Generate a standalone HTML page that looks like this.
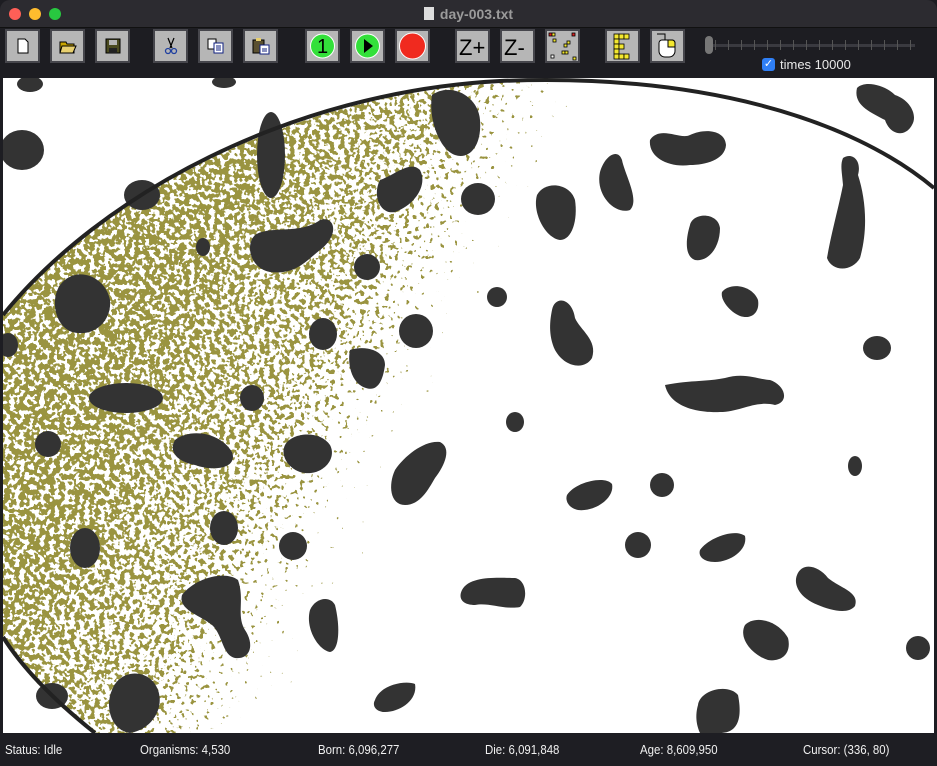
<!DOCTYPE html>
<html><head><meta charset="utf-8"><style>
*{margin:0;padding:0;box-sizing:border-box}
body{width:937px;height:766px;background:#1d1d22;font-family:"Liberation Sans",sans-serif;position:relative;overflow:hidden}
.title{position:absolute;left:0;top:0;width:937px;height:28px;background:#2c2b30;border-bottom:1px solid #111;border-radius:10px 10px 0 0}
.dot{position:absolute;top:8px;width:12px;height:12px;border-radius:50%}
.ttext{position:absolute;left:0;width:937px;top:6px;text-align:center;color:#9b9b9b;font-size:14px;font-weight:bold}
.btn{position:absolute;top:29px;width:35px;height:34px;background:#b6b6b6;border:2px solid #46464c}
.btn svg{position:absolute;left:0;top:0}
.status{position:absolute;top:733px;left:0;width:937px;height:33px;background:#1e1e23;color:#f0f0f0;font-size:13px}
.status span{position:absolute;top:9px;display:inline-block;transform:scaleX(0.88);transform-origin:left}
</style></head><body>
<div class="title">
<div class="dot" style="left:9px;background:#fe5f57"></div>
<div class="dot" style="left:29px;background:#febc2e"></div>
<div class="dot" style="left:49px;background:#28c840"></div>
<div class="ttext"><span style="display:inline-block;width:10px;height:13px;background:#ddd;margin-right:6px;vertical-align:-1px"></span>day-003.txt</div>
</div>

<div class="btn" style="left:5px"><svg width="31" height="30"><path d="M11 8h7l3 3v11h-10z" fill="#fff" stroke="#000"/></svg></div>
<div class="btn" style="left:50px"><svg width="31" height="30"><path d="M8 11h6l1 2h7v9h-14z" fill="#c8a400" stroke="#000"/><path d="M10 15h14l-3 7h-13z" fill="#e8d070" stroke="#000"/></svg></div>
<div class="btn" style="left:95px"><svg width="31" height="30"><rect x="9" y="8" width="14" height="14" fill="#4a4a20" stroke="#000"/><rect x="12" y="9" width="8" height="5" fill="#b6b6b6"/><rect x="12" y="17" width="8" height="5" fill="#222"/></svg></div>
<div class="btn" style="left:153px"><svg width="31" height="30"><path d="M13 7l4 10M19 7l-4 10" stroke="#000" stroke-width="1.2"/><circle cx="13" cy="20" r="2.5" fill="none" stroke="#2040a0" stroke-width="1.3"/><circle cx="19" cy="20" r="2.5" fill="none" stroke="#2040a0" stroke-width="1.3"/></svg></div>
<div class="btn" style="left:198px"><svg width="31" height="30"><rect x="8" y="8" width="8" height="10" fill="#fff" stroke="#000"/><rect x="14" y="12" width="9" height="10" fill="#fff" stroke="#102080"/><path d="M16 15h5M16 17h5M16 19h5" stroke="#102080"/></svg></div>
<div class="btn" style="left:243px"><svg width="31" height="30"><rect x="8" y="9" width="11" height="13" fill="#5a5030" stroke="#000"/><rect x="11" y="7" width="5" height="3" fill="#e8d070"/><rect x="15" y="14" width="9" height="9" fill="#fff" stroke="#102080"/><path d="M17 18h5M17 20h5" stroke="#102080"/></svg></div>
<div class="btn" style="left:305px"><svg width="31" height="30"><circle cx="15.5" cy="15" r="12" fill="#33e03a" stroke="#fff" stroke-width="1"/><text x="15.5" y="22" text-anchor="middle" font-size="20" font-family="Liberation Sans" fill="#000">1</text></svg></div>
<div class="btn" style="left:350px"><svg width="31" height="30"><circle cx="15.5" cy="15" r="12" fill="#33e03a" stroke="#fff" stroke-width="1"/><path d="M12 8l9 7-9 7z" fill="#000"/></svg></div>
<div class="btn" style="left:395px"><svg width="31" height="30"><circle cx="15.5" cy="15" r="13" fill="#f02a1f" stroke="#fff" stroke-width="1"/></svg></div>
<div class="btn" style="left:455px"><svg width="31" height="30"><text x="2" y="24" font-size="22" font-family="Liberation Sans" fill="#000">Z+</text></svg></div>
<div class="btn" style="left:500px"><svg width="31" height="30"><text x="2" y="24" font-size="22" font-family="Liberation Sans" fill="#000">Z-</text></svg></div>
<div class="btn" style="left:545px"><svg width="31" height="30" fill="#f4e830" stroke="#000" stroke-width=".8"><rect x="2" y="2" width="3" height="3" fill="#e02020"/><rect x="5" y="2" width="3" height="3"/><rect x="25" y="2" width="3" height="3" fill="#e02020"/><rect x="6" y="8" width="3" height="3"/><rect x="20" y="10" width="3" height="3"/><rect x="17" y="13" width="3" height="3"/><rect x="15" y="20" width="3" height="3"/><rect x="18" y="20" width="3" height="3"/><rect x="4" y="24" width="3" height="3" fill="#fff"/><rect x="26" y="26" width="3" height="3"/></svg></div>
<div class="btn" style="left:605px"><svg width="31" height="30" fill="#f4e830" stroke="#000" stroke-width=".8"><rect x="7" y="3" width="5" height="5"/><rect x="12" y="3" width="5" height="5"/><rect x="17" y="3" width="5" height="5"/><rect x="7" y="8" width="5" height="5"/><rect x="7" y="13" width="5" height="5"/><rect x="12" y="13" width="5" height="5"/><rect x="7" y="18" width="5" height="5"/><rect x="7" y="23" width="5" height="5"/><rect x="12" y="23" width="5" height="5"/><rect x="17" y="23" width="5" height="5"/></svg></div>
<div class="btn" style="left:650px"><svg width="31" height="30"><path d="M5 3h8v6" fill="none" stroke="#000"/><path d="M10 9h10a3 3 0 0 1 3 3v8a6 6 0 0 1-6 6h-4a6 6 0 0 1-6-6v-8a3 3 0 0 1 3-3z" fill="#fff" stroke="#000"/><path d="M16 9h4a3 3 0 0 1 3 3v4h-7z" fill="#f4e830" stroke="#000"/></svg></div>

<div style="position:absolute;left:705px;top:36px;width:8px;height:18px;border-radius:4px;background:#777"></div>
<div style="position:absolute;left:713px;top:44px;width:202px;height:3px;background:#3a3a40"></div>
<div style="position:absolute;left:715px;top:40px;width:202px;height:10px;background:repeating-linear-gradient(90deg,#555 0 1px,transparent 1px 13px)"></div>
<div style="position:absolute;left:762px;top:58px;width:13px;height:13px;border-radius:3px;background:#2f7ff6;color:#fff;font-size:11px;line-height:13px;text-align:center">✓</div>
<div style="position:absolute;left:780px;top:57px;color:#e8e8e8;font-size:13px">times 10000</div>

<svg style="position:absolute;left:0;top:78px" width="937" height="655" viewBox="0 78 937 655">
<defs>
<clipPath id="sp"><path d="M3,315 C100,195 300,90 520,80 L610,80 L610,733 L95,733 C60,710 20,670 3,637 Z"/></clipPath>
<linearGradient id="g" gradientUnits="userSpaceOnUse" x1="170" y1="300" x2="450" y2="440">
<stop offset="0" stop-color="#fff" stop-opacity="0.5"/><stop offset="0.5" stop-color="#fff" stop-opacity="0.42"/><stop offset="1" stop-color="#fff" stop-opacity="0"/></linearGradient>
<filter id="nz" x="0" y="0" width="1" height="1">
<feTurbulence type="fractalNoise" baseFrequency="0.2" numOctaves="2" seed="3" result="n"/>
<feColorMatrix in="n" type="matrix" values="0 0 0 0 0  0 0 0 0 0  0 0 0 0 0  1 0 0 0 0" result="na"/>
<feComposite in="na" in2="SourceGraphic" operator="arithmetic" k1="0" k2="1" k3="1" k4="-0.95" result="s"/>
<feComponentTransfer in="s" result="t"><feFuncA type="linear" slope="30" intercept="0"/></feComponentTransfer>
<feFlood flood-color="#9a9440"/>
<feComposite in2="t" operator="in"/>
</filter>
</defs>
<rect x="0" y="78" width="937" height="655" fill="#fff"/>
<g clip-path="url(#sp)"><rect x="0" y="78" width="620" height="655" fill="url(#g)" filter="url(#nz)"/></g>
<g fill="#333">
<ellipse cx="22" cy="150" rx="22" ry="20"/>
<ellipse cx="30" cy="84" rx="13" ry="8"/>
<ellipse cx="224" cy="82" rx="12" ry="6"/>
<ellipse cx="271" cy="155" rx="14" ry="43"/>
<ellipse cx="142" cy="195" rx="18" ry="15"/>
<path d="M255 235 C270 225 300 235 320 220 C335 215 340 235 320 250 C305 262 295 275 270 272 C250 268 245 245 255 235Z"/>
<ellipse cx="203" cy="247" rx="7" ry="9"/>
<path d="M60 285 C75 265 105 275 110 300 C112 320 95 338 72 332 C55 326 50 300 60 285Z"/>
<path d="M432 95 C450 82 478 95 480 120 C482 145 470 160 455 155 C440 150 428 120 432 95Z"/>
<path d="M380 180 C395 175 410 160 420 170 C428 185 415 205 395 212 C380 215 372 195 380 180Z"/>
<circle cx="367" cy="267" r="13"/>
<circle cx="416" cy="331" r="17"/>
<ellipse cx="323" cy="334" rx="14" ry="16"/>
<ellipse cx="8" cy="345" rx="10" ry="12"/>
<path d="M350 350 C365 345 385 350 385 365 C383 380 378 392 366 388 C352 384 347 365 350 350Z"/>
<ellipse cx="126" cy="398" rx="37" ry="15"/>
<ellipse cx="252" cy="398" rx="12" ry="13"/>
<circle cx="48" cy="444" r="13"/>
<path d="M175 440 C190 428 220 432 232 452 C238 468 215 472 195 465 C178 462 168 452 175 440Z"/>
<path d="M285 445 C292 432 320 430 330 445 C338 460 320 478 300 472 C288 468 280 455 285 445Z"/>
<ellipse cx="224" cy="528" rx="14" ry="17"/>
<ellipse cx="85" cy="548" rx="15" ry="20"/>
<circle cx="293" cy="546" r="14"/>
<path d="M182 595 C195 578 225 570 238 580 C245 600 236 615 245 630 C255 645 250 660 235 658 C222 655 223 635 212 625 C200 615 178 610 182 595Z"/>
<path d="M310 610 C315 598 330 595 335 605 C340 625 340 650 330 652 C318 650 305 628 310 610Z"/>
<path d="M112 690 C120 668 150 668 158 690 C165 710 150 730 130 733 C110 730 105 705 112 690Z"/>
<ellipse cx="52" cy="696" rx="16" ry="13"/>
<path d="M375 700 C380 685 405 680 415 684 C418 700 400 712 385 712 C375 712 372 705 375 700Z"/>
<ellipse cx="478" cy="199" rx="17" ry="16"/>
<path d="M537 195 C545 180 570 183 575 200 C578 220 572 240 560 240 C545 238 532 212 537 195Z"/>
<path d="M600 172 C605 155 618 148 622 160 C625 175 640 200 630 210 C615 215 595 195 600 172Z"/>
<path d="M650 140 C660 125 680 140 690 135 C705 128 725 130 726 145 C725 160 705 165 690 165 C670 168 648 158 650 140Z"/>
<path d="M690 225 C693 212 718 212 720 228 C720 248 708 262 695 260 C684 256 686 238 690 225Z"/>
<path d="M722 292 C730 282 752 285 758 300 C760 312 752 320 740 316 C730 312 720 300 722 292Z"/>
<ellipse cx="497" cy="297" rx="10" ry="10"/>
<path d="M552 310 C555 295 572 298 575 318 C580 330 598 340 592 358 C585 370 565 368 555 350 C548 335 550 320 552 310Z"/>
<path d="M665 385 C690 380 705 382 725 378 C745 372 760 380 770 380 C785 385 790 402 775 405 C755 400 740 412 720 412 C700 413 670 408 665 385Z"/>
<path d="M843 158 C852 152 862 160 858 175 C866 200 868 230 860 258 C852 272 832 272 827 258 C832 230 838 210 843 185 C842 172 840 165 843 158Z"/>
<path d="M857 88 C865 80 885 85 895 95 C910 100 918 115 912 125 C905 138 890 135 885 120 C870 112 853 105 857 88Z"/>
<ellipse cx="877" cy="348" rx="14" ry="12"/>
<ellipse cx="515" cy="422" rx="9" ry="10"/>
<path d="M395 470 C405 455 425 440 440 442 C452 448 445 465 435 478 C428 490 420 505 405 505 C390 505 388 485 395 470Z"/>
<path d="M567 495 C575 482 605 475 612 484 C615 498 595 512 578 510 C568 508 565 500 567 495Z"/>
<ellipse cx="662" cy="485" rx="12" ry="12"/>
<circle cx="638" cy="545" r="13"/>
<path d="M700 550 C708 538 735 528 745 536 C748 550 730 562 715 562 C703 562 698 556 700 550Z"/>
<path d="M462 590 C470 575 500 578 515 578 C527 580 528 600 520 607 C505 610 488 602 475 605 C462 605 458 598 462 590Z"/>
<path d="M797 575 C802 562 818 565 828 578 C840 588 860 592 855 606 C848 615 830 610 818 605 C800 598 793 585 797 575Z"/>
<ellipse cx="855" cy="466" rx="7" ry="10"/>
<path d="M745 625 C755 615 778 620 788 638 C792 655 780 662 768 660 C752 655 738 638 745 625Z"/>
<path d="M698 705 C700 690 728 683 738 695 C742 715 740 733 720 733 L700 733 C695 722 696 712 698 705Z"/>
<ellipse cx="918" cy="648" rx="12" ry="12"/>
</g>
<g fill="none" stroke="#222" stroke-width="4">
<path d="M3,315 C100,195 290,92 500,81 C700,73 850,118 934,188"/>
<path d="M3,637 C25,672 60,705 95,733"/>
</g>
<rect x="0" y="78" width="3" height="655" fill="#1d1d22"/>
<rect x="934" y="78" width="3" height="655" fill="#1d1d22"/>
</svg>

<div class="status">
<span style="left:5px">Status: Idle</span>
<span style="left:140px">Organisms: 4,530</span>
<span style="left:318px">Born: 6,096,277</span>
<span style="left:485px">Die: 6,091,848</span>
<span style="left:640px">Age: 8,609,950</span>
<span style="left:803px">Cursor: (336, 80)</span>
</div>
</body></html>
